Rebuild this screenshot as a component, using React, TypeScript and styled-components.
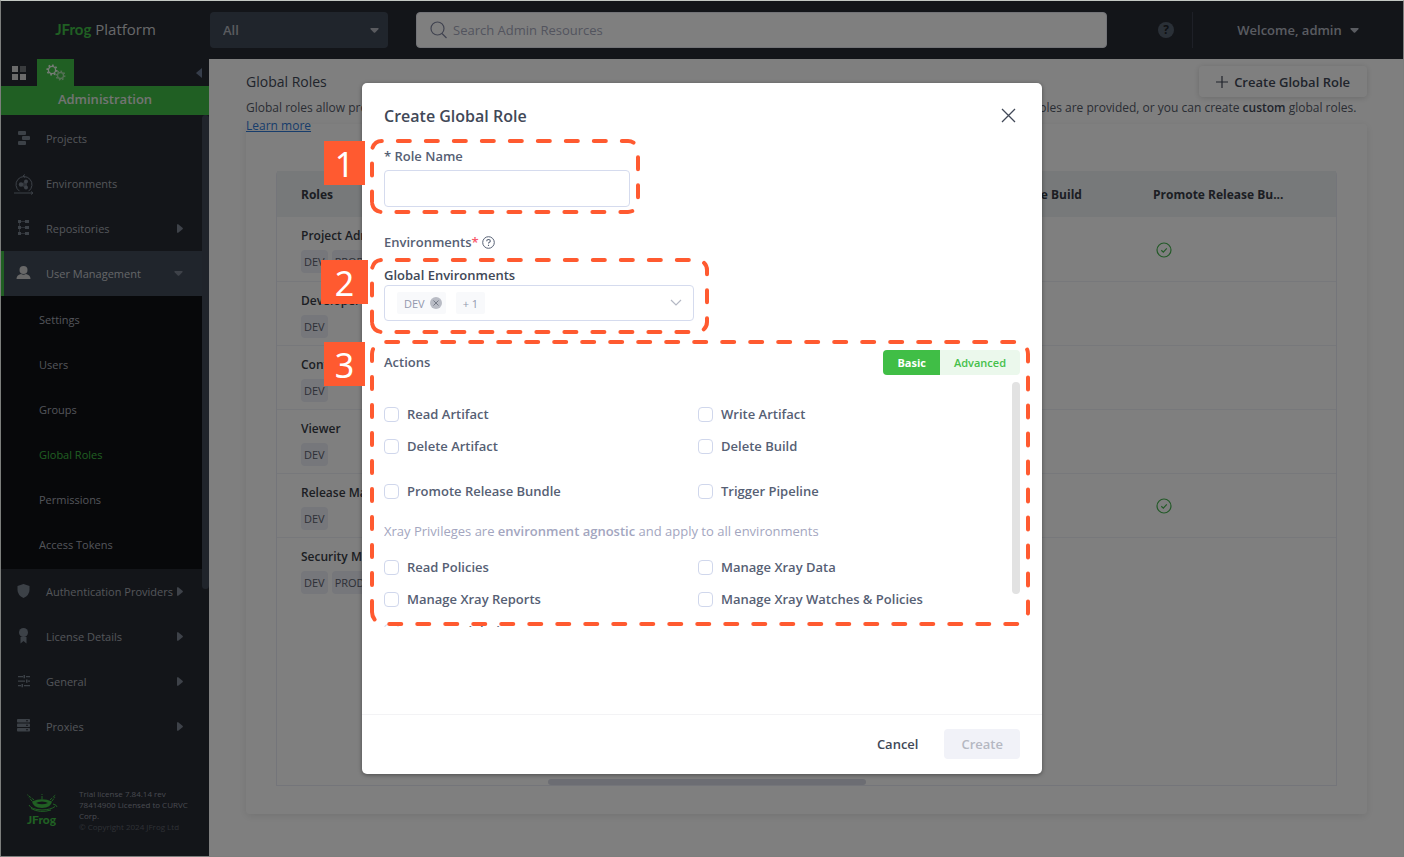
import React from "react";
import styled, { createGlobalStyle, css } from "styled-components";

const SANS = '"Open Sans", "Noto Sans", sans-serif';
const GREEN = "#40be46";
const CALLOUT = "#ff5a30";

const GlobalStyle = createGlobalStyle`
  *, *::before, *::after { box-sizing: border-box; }
  body { margin: 0; font-family: ${SANS}; font-size: 13px; color: #414857; background: #fff; }
  button, input, select { font-family: inherit; }
  button { border: 0; background: none; padding: 0; cursor: pointer; }
  h1, h2, p, ul { margin: 0; padding: 0; }
  ul { list-style: none; }
`;

const Frame = styled.div`
  position: relative;
  display: flex;
  flex-direction: column;
  min-height: 100vh;
  border: 1px solid #7c7e7c;
  border-top-color: #c3c8c3;
`;

/* ---------- top bar ---------- */
const TopBar = styled.header`
  display: flex;
  align-items: center;
  height: 58px;
  background: #262a33;
`;
const Brand = styled.div`
  width: 209px;
  padding-bottom: 2px;
  text-align: center;
  font-size: 15px;
  color: #cfd0d4;
`;
const BrandMark = styled.b`
  font-family: Lato, sans-serif;
  font-weight: 700;
  color: ${GREEN};
`;
const Scope = styled.div`
  position: relative;
  width: 178px;
  color: #b4b7bf;
  svg { position: absolute; right: 9px; top: 16px; pointer-events: none; }
`;
const ScopeSelect = styled.select`
  appearance: none;
  width: 100%;
  height: 36px;
  padding: 0 13px;
  border: 0;
  border-radius: 4px;
  background: #414b59;
  color: #b4b7bf;
  font-size: 13px;
  font-weight: 600;
`;
const Search = styled.label`
  flex: 1;
  display: flex;
  align-items: center;
  gap: 4px;
  height: 36px;
  margin-left: 28px;
  padding: 0 13px;
  border-radius: 4px;
  background: #fff;
  border: 1px solid #e4e6ee;
  color: #8287a0;
  input {
    flex: 1;
    border: 0;
    outline: 0;
    background: none;
    font-size: 13px;
    &::placeholder { color: #a6a9bd; opacity: 1; }
  }
`;
const Account = styled.div`
  display: flex;
  align-items: center;
  width: 296px;
  height: 36px;
  padding-left: 51px;
`;
const HelpButton = styled.button`
  display: flex;
  width: 16px;
  height: 16px;
  justify-content: center;
  align-items: center;
  border-radius: 8px;
  background: #55606f;
  color: #1d2027;
  font-size: 12px;
  font-weight: 700;
  line-height: 16px;
`;
const UserMenu = styled.button`
  flex: 1;
  display: flex;
  align-items: center;
  justify-content: center;
  gap: 8px;
  height: 36px;
  margin-left: 18px;
  border-left: 1px solid #3c414e;
  color: #b4b8c2;
  font-size: 13px;
  font-weight: 600;
`;

/* ---------- side bar ---------- */
const Columns = styled.div`
  flex: 1;
  display: flex;
`;
const Sidebar = styled.aside`
  display: flex;
  flex-direction: column;
  width: 208px;
  flex: none;
  background: #262a33;
`;
const ModeTabs = styled.div`
  display: flex;
  height: 27px;
`;
const ModeTab = styled.button<{ $on?: boolean }>`
  display: flex;
  align-items: center;
  justify-content: center;
  width: ${(p) => (p.$on ? 37 : 36)}px;
  background: ${(p) => (p.$on ? GREEN : "none")};
`;
const Collapse = styled.button`
  display: flex;
  align-items: center;
  margin-left: auto;
  padding-right: 7px;
  color: #6c7a94;
`;
const ModeTitle = styled.div`
  height: 29px;
  line-height: 27px;
  text-align: center;
  background: ${GREEN};
  color: #e4e8e4;
  font-size: 13px;
  font-weight: 600;
`;
const NavScroll = styled.div`
  display: flex;
`;
const NavThumb = styled.div`
  width: 7px;
  height: 474px;
  border-radius: 4px;
  background: #414857;
`;
const Nav = styled.nav`
  flex: 1;
  padding-top: 1px;
`;
const NavLink = styled.a<{ $active?: boolean }>`
  display: flex;
  align-items: center;
  height: 45px;
  padding-left: ${(p) => (p.$active ? 10 : 13)}px;
  padding-right: 19px;
  color: ${(p) => (p.$active ? "#c8cad0" : "#a6aab4")};
  font-size: 11px;
  white-space: nowrap;
  text-decoration: none;
  ${(p) => p.$active && css`background: #414b59; border-left: 3px solid ${GREEN};`}
`;
const NavIcon = styled.span<{ $bright?: boolean }>`
  display: flex;
  width: 32px;
  color: ${(p) => (p.$bright ? "#d0d0d0" : "#79828f")};
`;
const NavArrow = styled.span`
  display: flex;
  margin-left: auto;
  color: #7c8492;
`;
const SubNav = styled.div`
  padding: 1px 0 2px;
  background: #0f1014;
`;
const SubLink = styled.a<{ $current?: boolean }>`
  display: block;
  height: 45px;
  line-height: 45px;
  padding-left: 38px;
  color: ${(p) => (p.$current ? GREEN : "#a6aab4")};
  font-size: 11px;
  text-decoration: none;
`;
const License = styled.footer`
  display: flex;
  align-items: center;
  gap: 20px;
  margin-top: auto;
  padding: 0 12px 24px 23px;
  font-size: 8px;
  line-height: 11px;
  color: #9195a0;
`;
const LicenseMark = styled.div`
  flex: none;
  display: flex;
  flex-direction: column;
  align-items: center;
  width: 35px;
  color: ${GREEN};
  font: 900 12px/14px Lato, sans-serif;
`;
const Copyright = styled.p`
  color: #5f636b;
`;

/* ---------- page ---------- */
const Page = styled.main`
  flex: 1;
  min-width: 0;
  display: flex;
  flex-direction: column;
  padding: 7px 36px 42px 37px;
`;
const PageHead = styled.div`
  display: flex;
  align-items: center;
  justify-content: space-between;
  height: 31px;
  margin-bottom: 2px;
  h1 { font-size: 14px; font-weight: 400; color: #414857; }
`;
const NewRole = styled.button`
  display: flex;
  align-items: center;
  gap: 6px;
  height: 31px;
  padding: 0 17px;
  border-radius: 4px;
  box-shadow: 0 1px 6px rgba(0, 0, 0, 0.16);
  color: #414857;
  font-size: 13px;
  font-weight: 600;
`;
const Intro = styled.p`
  font-size: 12px;
  line-height: 18px;
  white-space: nowrap;
  color: #555b69;
  b { font-weight: 600; color: #414857; }
  a { display: table; color: #2f7bd9; }
`;
const Card = styled.section`
  flex: 1;
  display: flex;
  margin-top: -11px;
  padding: 47px 30px 28px;
  border-radius: 4px;
  box-shadow: 0 2px 8px rgba(0, 0, 0, 0.1);
`;
const TableBox = styled.div`
  flex: 1;
  display: flex;
  flex-direction: column;
  border: 1px solid #e9ebf5;
  border-top: 0;
  border-radius: 4px 4px 0 0;
`;
const Table = styled.table`
  width: 100%;
  table-layout: fixed;
  border-collapse: collapse;
  th {
    height: 46px;
    padding: 0 24px;
    background: #eef2f5;
    text-align: left;
    font-size: 12px;
    font-weight: 700;
    color: #383c46;
    white-space: nowrap;
  }
  td {
    height: 64px;
    padding: 2px 24px 0;
    border-bottom: 1px solid #eff0f6;
    vertical-align: middle;
  }
  tr:last-child td { border-bottom: 0; }
  svg { display: block; margin-left: 3px; }
`;
const Col = styled.col<{ $w?: number }>`
  width: ${(p) => (p.$w ? p.$w + "px" : "auto")};
`;
const RoleName = styled.div`
  margin-bottom: 4px;
  line-height: 20px;
  font-size: 12px;
  font-weight: 600;
  color: #383c46;
`;
const Tags = styled.div`
  display: flex;
  gap: 4px;
`;
const Tag = styled.span`
  height: 23px;
  line-height: 23px;
  padding: 0 3px;
  border-radius: 4px;
  background: #eceef6;
  font-size: 11px;
  color: #5b606e;
`;
const TableThumb = styled.div`
  width: 30%;
  height: 6px;
  margin: auto auto 0 271px;
  border-radius: 3px;
  background: #d8dbe6;
`;

/* ---------- dialog ---------- */
const Overlay = styled.div`
  position: absolute;
  inset: 0;
  display: flex;
  align-items: center;
  justify-content: center;
  background: rgba(0, 0, 0, 0.5);
`;
const Dialog = styled.section`
  width: 680px;
  border-radius: 5px;
  background: #fff;
  box-shadow: 0 1px 4px rgba(0, 0, 0, 0.4);
  color: #414857;
`;
const DialogBody = styled.div`
  padding: 21px 22px 87px;
`;
const DialogHead = styled.div`
  display: flex;
  align-items: center;
  justify-content: space-between;
  height: 24px;
  margin-bottom: 18px;
  h2 { font-size: 16px; font-weight: 600; }
  button { display: flex; margin-right: 4px; padding-bottom: 2px; color: #414857; }
`;
const Group = styled.div<{ $gap?: number }>`
  position: relative;
  margin-bottom: ${(p) => p.$gap || 0}px;
`;
const Label = styled.label<{ $strong?: boolean }>`
  display: block;
  line-height: 20px;
  font-size: 13px;
  font-weight: 600;
  color: ${(p) => (p.$strong ? "#414857" : "#566074")};
`;
const NameInput = styled.input`
  display: block;
  width: 246px;
  height: 37px;
  margin-top: 4px;
  padding: 0 12px;
  border: 1px solid #d5dbee;
  border-radius: 4px;
  outline: 0;
`;
const SectionLabel = styled.div`
  display: flex;
  align-items: center;
  height: 20px;
  margin-bottom: 13px;
  font-size: 13px;
  font-weight: 600;
  color: #566074;
  em { margin-right: 3px; font-style: normal; color: #f8586a; }
`;
const MultiSelect = styled.div`
  display: flex;
  align-items: center;
  gap: 10px;
  width: 310px;
  height: 36px;
  padding: 0 11px 0 12px;
  border: 1px solid #d5dbee;
  border-radius: 4px;
`;
const Picked = styled.span`
  display: flex;
  align-items: center;
  gap: 5px;
  height: 22px;
  padding: 0 7px;
  border-radius: 2px;
  background: #f8f9fb;
  font-size: 11px;
  color: #9398ae;
  button { display: flex; margin-right: -3px; }
`;
const OpenList = styled.button`
  display: flex;
  margin-left: auto;
  color: #b4b8c4;
`;
const ActionsHead = styled.div`
  display: flex;
  align-items: center;
  justify-content: space-between;
  padding-top: 3px;
  margin-bottom: 7px;
  font-size: 13px;
  line-height: 25px;
  font-weight: 600;
  color: #566074;
`;
const Toggle = styled.div`
  display: flex;
  border-radius: 4px;
  overflow: hidden;
`;
const ToggleButton = styled.button<{ $on?: boolean }>`
  height: 25px;
  padding: 0 14px;
  background: ${(p) => (p.$on ? GREEN : "#ebf8ec")};
  color: ${(p) => (p.$on ? "#fff" : "#45c04b")};
  font-size: 11px;
  font-weight: ${(p) => (p.$on ? 700 : 600)};
`;
const ActionsScroll = styled.div`
  display: flex;
  justify-content: space-between;
  height: 245px;
  overflow: hidden;
`;
const ActionsList = styled.div`
  flex: 1;
  padding-top: 16px;
`;
const ActionGrid = styled.div`
  display: grid;
  grid-template-columns: 1fr 1fr;
  grid-auto-rows: 32px;
  margin-bottom: 13px;
`;
const ActionsThumb = styled.div`
  width: 8px;
  height: 212px;
  border-radius: 4px;
  background: #e2e2e2;
`;
const Check = styled.label`
  display: flex;
  align-items: center;
  gap: 8px;
  font-size: 13px;
  font-weight: 600;
  color: #566074;
  white-space: nowrap;
  input {
    appearance: none;
    width: 15px;
    height: 15px;
    margin: 0;
    border: 1px solid #d0d7ec;
    border-radius: 4px;
    background: #fff;
  }
`;
const Note = styled.p`
  margin: 14px 0 10px;
  line-height: 20px;
  font-size: 13px;
  color: #a3a6c0;
  b { font-weight: 600; }
`;
const DialogFoot = styled.footer`
  display: flex;
  justify-content: flex-end;
  gap: 9px;
  padding: 14px 22px 15px;
  border-top: 1px solid #f3f3f5;
`;
const FootButton = styled.button`
  height: 30px;
  padding: 0 17px;
  border-radius: 4px;
  color: #414857;
  font-size: 13px;
  font-weight: 600;
  &:disabled { background: #f1f2f8; color: #b5b8c2; }
`;

/* ---------- numbered callouts laid over the dialog ---------- */
const CalloutBox = styled.div`
  position: absolute;
  left: -14px;
  top: -7px;
  pointer-events: none;
  svg { display: block; }
`;
const CalloutNumber = styled.span<{ $wide?: boolean }>`
  position: absolute;
  top: 2px;
  right: calc(100% + ${(p) => (p.$wide ? 2 : 5)}px);
  width: ${(p) => (p.$wide ? 47 : 41)}px;
  height: 44px;
  line-height: 46px;
  text-align: center;
  background: ${CALLOUT};
  color: #fff;
  font-family: "Noto Sans", sans-serif;
  font-size: 34px;
`;

interface CalloutProps { n: number; w: number; h: number; r?: number; phase?: number; wide?: boolean }
function Callout({ n, w, h, r = 10, phase = 0, wide }: CalloutProps) {
  const d = `M2 ${h + 2 - r} a${r} ${r} 0 0 0 ${r} ${r} h${w - 2 * r} a${r} ${r} 0 0 0 ${r} ${-r} v${2 * r - h} a${r} ${r} 0 0 0 ${-r} ${-r} h${2 * r - w} a${r} ${r} 0 0 0 ${-r} ${r} Z`;
  return (
    <CalloutBox>
      <CalloutNumber $wide={wide}>{n}</CalloutNumber>
      <svg width={w + 4} height={h + 4} fill="none" stroke={CALLOUT} strokeWidth="4" strokeLinecap="round">
        <path d={d} strokeDasharray="12 16" strokeDashoffset={phase - 2} />
      </svg>
    </CalloutBox>
  );
}

/* ---------- icons ---------- */
const CaretDown = () => (
  <svg width="9" height="5" viewBox="0 0 10 6" preserveAspectRatio="none" fill="currentColor"><path d="M1 0h8q1 .6.3 1.5L5.8 5.4q-.8.8-1.6 0L.7 1.5Q0 .6 1 0z" /></svg>
);
const CaretRight = () => (
  <svg width="6" height="9" viewBox="0 0 6 9" fill="currentColor"><path d="M0 1Q.5-.4 1.500.4L5.500 3.700q.8.8 0 1.600L1.500 8.600Q.5 9.400 0 8z" /></svg>
);
const CaretLeft = () => (
  <svg width="6" height="10" viewBox="0 0 6 10" fill="currentColor"><path d="M6 0v10L.5 5.500q-.5-.5 0-1z" /></svg>
);
const Gear = ({ x, y, r, o }: { x: number; y: number; r: number; o: number }) => (
  <g fill="none" stroke="#fff" opacity={o}>
    <circle cx={x} cy={y} r={r} strokeWidth="1.300" />
    <circle cx={x} cy={y} r={r + 1.2} strokeWidth="1.600" pathLength={16} strokeDasharray="1 1" />
  </g>
);
const icons: Record<string, React.ReactNode> = {
  projects: <svg width="18" height="18" fill="currentColor"><rect x="4" y="1" width="8" height="4" rx="1" /><rect x="8" y="6" width="8" height="4" rx="1" /><rect x="4" y="11" width="8" height="4" rx="1" /></svg>,
  environments: (
    <svg width="20" height="22" viewBox="0 0 20 22" fill="none" stroke="currentColor">
      <path d="M5.500 18.200a8 8 0 1 1 9 0M0 20h18M11 1.500l-2 1.500 2 1.500M17 18.500l2 1.500-2 1.500" />
      <g fill="currentColor" stroke="none"><circle cx="7" cy="11.500" r="2.200" /><circle cx="12" cy="8.500" r="2" /><circle cx="12" cy="14.500" r="2" /><path d="M7 11l5-3 1 .8v6.500l-1 .3-5-3z" opacity=".6" /></g>
    </svg>
  ),
  repositories: (
    <svg width="18" height="20" fill="currentColor">
      <path d="M5 2h8v1H5zM5 8h8v1H5zM5 14h8v1H5zM5 2h1v13H5z" opacity=".6" />
      <path d="M4 1h3v3H4zM4 7h3v3H4zM4 13h3v3H4zM11 1h4v3h-4zM11 7h4v3h-4zM11 13h4v3h-4z" />
    </svg>
  ),
  user: <svg width="18" height="18" fill="currentColor"><circle cx="9.500" cy="5" r="4" /><path d="M2.500 14q0-4 4.500-5 2.500 1.500 5 0 4.500 1 4.500 5z" /></svg>,
  shield: <svg width="18" height="18" fill="currentColor"><path d="M9.500 1l6 2v4q0 5-6 8-6-3-6-8V3z" /></svg>,
  license: <svg width="18" height="20" fill="currentColor"><circle cx="9.500" cy="5.500" r="4.500" /><path d="M6.500 10h6v6.500l-3-2.500-3 2.500z" /></svg>,
  general: (
    <svg width="18" height="16" fill="currentColor">
      <path d="M4 2h5v1.300H4zM12 2h4v1.300h-4zM4 6.500h7v1.300H4zM14 6.500h2v1.300h-2zM4 11h3v1.300H4zM10 11h6v1.300h-6zM9.500 1H11v3.300H9.500zM12 5.500h1.500v3.300H12zM7.500 10H9v3.300H7.500z" />
    </svg>
  ),
  proxies: (
    <svg width="18" height="18" fill="currentColor">
      <rect x="3" y="1" width="13" height="3.500" rx=".8" /><rect x="3" y="5.500" width="13" height="3.500" rx=".8" /><rect x="3" y="10" width="13" height="3.500" rx=".8" />
      <path d="M12 2.300h2v1h-2zM12 6.800h2v1h-2zM12 11.300h2v1h-2z" fill="#262a33" />
    </svg>
  ),
};
const Allowed = () => (
  <svg width="16" height="16" fill="none" stroke="#46b350" strokeWidth="1.200" role="img" aria-label="Allowed">
    <circle cx="8" cy="8" r="7" /><path d="M5.300 8.200l2 1.900 3.500-3.700" />
  </svg>
);

const topNav: [string, string, boolean][] = [
  ["projects", "Projects", false],
  ["environments", "Environments", false],
  ["repositories", "Repositories", true],
];
const lowerNav: [string, string][] = [
  ["shield", "Authentication Providers"],
  ["license", "License Details"],
  ["general", "General"],
  ["proxies", "Proxies"],
];
const subNav = ["Settings", "Users", "Groups", "Global Roles", "Permissions", "Access Tokens"];
const roles: { name: string; tags: string[]; promote?: boolean }[] = [
  { name: "Project Admin", tags: ["DEV", "PROD"], promote: true },
  { name: "Developer", tags: ["DEV"] },
  { name: "Contributor", tags: ["DEV"] },
  { name: "Viewer", tags: ["DEV"] },
  { name: "Release Manager", tags: ["DEV"], promote: true },
  { name: "Security Manager", tags: ["DEV", "PROD"] },
];

const Checks = ({ items }: { items: string[] }) => (
  <ActionGrid>
    {items.map((t) => <Check key={t}><input type="checkbox" />{t}</Check>)}
  </ActionGrid>
);

export default function App() {
  return (
    <Frame>
      <GlobalStyle />
      <TopBar>
        <Brand><BrandMark>JFrog</BrandMark> Platform</Brand>
        <Scope>
          <ScopeSelect aria-label="Scope"><option>All</option></ScopeSelect>
          <CaretDown />
        </Scope>
        <Search>
          <svg width="17" height="18" fill="none" stroke="currentColor" strokeWidth="1.200"><circle cx="7.500" cy="7.500" r="6.500" /><path d="M12 12.500l4.500 4.500" /></svg>
          <input placeholder="Search Admin Resources" aria-label="Search Admin Resources" />
        </Search>
        <Account>
          <HelpButton aria-label="Help">?</HelpButton>
          <UserMenu>Welcome, admin <CaretDown /></UserMenu>
        </Account>
      </TopBar>
      <Columns>
        <Sidebar>
          <ModeTabs>
            <ModeTab aria-label="Application">
              <svg width="14" height="14" fill="#d6d6d6"><path d="M0 0h6v6H0zM0 8h6v6H0zM8 8h6v6H8z" /><path d="M8 0h6v6H8z" opacity=".45" /></svg>
            </ModeTab>
            <ModeTab $on aria-label="Administration">
              <svg width="20" height="17"><Gear x={6} y={6} r={3.6} o={0.9} /><Gear x={14.5} y={11.5} r={3} o={0.55} /></svg>
            </ModeTab>
            <Collapse aria-label="Collapse menu"><CaretLeft /></Collapse>
          </ModeTabs>
          <ModeTitle>Administration</ModeTitle>
          <NavScroll>
            <Nav>
              {topNav.map(([icon, text, arrow]) => (
                <NavLink key={text} href="#"><NavIcon>{icons[icon]}</NavIcon>{text}{arrow && <NavArrow><CaretRight /></NavArrow>}</NavLink>
              ))}
              <NavLink href="#" $active><NavIcon $bright>{icons.user}</NavIcon>User Management<NavArrow><CaretDown /></NavArrow></NavLink>
              <SubNav>
                {subNav.map((t) => <SubLink key={t} href="#" $current={t === "Global Roles"}>{t}</SubLink>)}
              </SubNav>
              {lowerNav.map(([icon, text]) => (
                <NavLink key={text} href="#"><NavIcon>{icons[icon]}</NavIcon>{text}<NavArrow><CaretRight /></NavArrow></NavLink>
              ))}
            </Nav>
            <NavThumb />
          </NavScroll>
          <License>
            <LicenseMark>
              <svg width="34" height="20" viewBox="0 0 34 20" fill="none" stroke="currentColor">
                <path d="M7 8.500q10-4.500 20 0-1 6-10 6.500-9-.5-10-6.500z" fill="currentColor" stroke="none" />
                <path d="M11 10q6 2.500 12 0-2-1.500-6-1.500T11 10z" fill="#262a33" stroke="none" />
                <path d="M9 7L2 1.500M7 8L4 4.500M25 7l6-5.500M27 8l3-4M17 6V1" strokeDasharray="3 1" />
                <path d="M4 12q2 4.500 13 5 9-.3 13-3.500M6 15.500q9 5 20 1.500M28 11q4 1 4 3" />
              </svg>
              JFrog
            </LicenseMark>
            <div>
              <p>Trial license 7.84.14 rev 78414900 Licensed to CURVC Corp.</p>
              <Copyright>© Copyright 2024 JFrog Ltd</Copyright>
            </div>
          </License>
        </Sidebar>
        <Page>
          <PageHead>
            <h1>Global Roles</h1>
            <NewRole>
              <svg width="12" height="12" stroke="currentColor" strokeWidth="1.200"><path d="M6 0v12M0 6h12" /></svg>
              Create Global Role
            </NewRole>
          </PageHead>
          <Intro>
            Global roles allow project admins to grant all users and groups the same permissions across several projects. A number of <b>predefined</b> global roles are provided, or you can create <b>custom</b> global roles.
            <a href="#">Learn more</a>
          </Intro>
          <Card>
            <TableBox>
              <Table>
                <colgroup><Col /><Col $w={157} /><Col $w={162} /><Col $w={45} /></colgroup>
                <thead><tr><th>Roles</th><th>Promote Build</th><th>Promote Release Bu...</th><th /></tr></thead>
                <tbody>
                  {roles.map((r) => (
                    <tr key={r.name}>
                      <td><RoleName>{r.name}</RoleName><Tags>{r.tags.map((t) => <Tag key={t}>{t}</Tag>)}</Tags></td>
                      <td />
                      <td>{r.promote && <Allowed />}</td>
                      <td />
                    </tr>
                  ))}
                </tbody>
              </Table>
              <TableThumb />
            </TableBox>
          </Card>
        </Page>
      </Columns>

      <Overlay>
        <Dialog role="dialog" aria-labelledby="dialog-title">
          <DialogBody>
            <DialogHead>
              <h2 id="dialog-title">Create Global Role</h2>
              <button aria-label="Close"><svg width="15" height="15" stroke="currentColor" strokeWidth="1.300"><path d="M1 1l13 13M14 1L1 14" /></svg></button>
            </DialogHead>
            <Group $gap={25}>
              <Label htmlFor="role-name">* Role Name</Label>
              <NameInput id="role-name" />
              <Callout n={1} w={266} h={71} />
            </Group>
            <SectionLabel>
              Environments<em>*</em>
              <svg width="13" height="13" fill="none" stroke="currentColor"><circle cx="6.500" cy="6.500" r="5.800" /><path d="M4.700 5.200q0-1.700 1.800-1.700t1.800 1.500q0 .9-.9 1.300t-.9 1.200M6.500 8.700v1.200" strokeWidth="1.100" /></svg>
            </SectionLabel>
            <Group $gap={26}>
              <Label as="div" $strong id="env-label">Global Environments</Label>
              <MultiSelect role="group" aria-labelledby="env-label">
                <Picked>
                  DEV
                  <button aria-label="Remove DEV"><svg width="12" height="12"><circle cx="6" cy="6" r="6" fill="#b9bcc5" /><path d="M3.500 3.500l5 5M8.500 3.500l-5 5" stroke="#767b87" /></svg></button>
                </Picked>
                <Picked>+ 1</Picked>
                <OpenList aria-label="Show environments"><svg width="12" height="8" fill="none" stroke="currentColor" strokeWidth="1.200"><path d="M1 1l5 5 5-5" /></svg></OpenList>
              </MultiSelect>
              <Callout n={2} w={335} h={72} wide />
            </Group>
            <Group>
              <ActionsHead>
                Actions
                <Toggle><ToggleButton $on>Basic</ToggleButton><ToggleButton>Advanced</ToggleButton></Toggle>
              </ActionsHead>
              <ActionsScroll>
                <ActionsList>
                  <Checks items={["Read Artifact", "Write Artifact", "Delete Artifact", "Delete Build"]} />
                  <Checks items={["Promote Release Bundle", "Trigger Pipeline"]} />
                  <Note>Xray Privileges are <b>environment agnostic</b> and apply to all environments</Note>
                  <Checks items={["Read Policies", "Manage Xray Data", "Manage Xray Reports", "Manage Xray Watches & Policies", "Manage Violations"]} />
                </ActionsList>
                <ActionsThumb />
              </ActionsScroll>
              <Callout n={3} w={656} h={282} r={12} phase={6} />
            </Group>
          </DialogBody>
          <DialogFoot>
            <FootButton>Cancel</FootButton>
            <FootButton disabled>Create</FootButton>
          </DialogFoot>
        </Dialog>
      </Overlay>
    </Frame>
  );
}
